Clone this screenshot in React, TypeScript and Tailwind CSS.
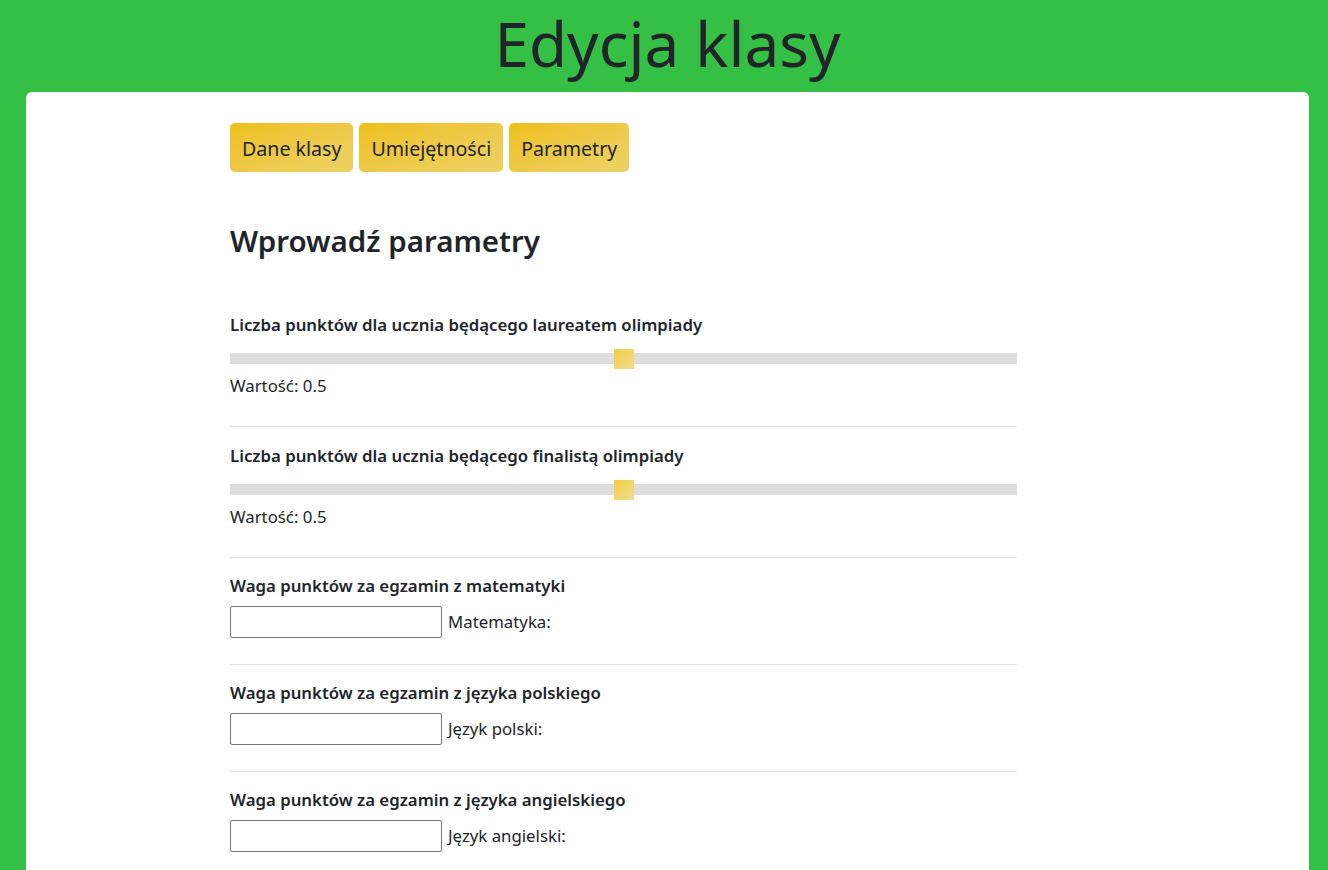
const FONT = "font-['Noto_Sans','Open_Sans',sans-serif]";

function Slider({ label, value, first }: { label: string; value: number; first?: boolean }) {
  return (
    <div className={first ? "pt-[17px] pb-7" : "border-t border-[#e3e3e3] pt-[17px] pb-7"}>
      <div className="text-[16.8px] font-semibold leading-6">{label}</div>
      <div className="relative mt-4 h-[11px] w-full bg-[#dedede]">
        <div
          className="absolute top-1/2 h-5 w-5 -translate-x-1/2 -translate-y-1/2 bg-linear-to-br from-[#f2cd3c] to-[#f0dd8c]"
          style={{ left: `${value * 100}%` }}
        />
      </div>
      <div className="mt-[10px] text-[16.8px] leading-6">Wartość: {value}</div>
    </div>
  );
}

function WeightField({ label, name }: { label: string; name: string }) {
  return (
    <div className="border-t border-[#e3e3e3] pt-4 pb-[26px]">
      <div className="text-[16.8px] font-semibold leading-6">{label}</div>
      <div className="mt-2 flex items-center gap-[6px]">
        <input
          type="text"
          className="h-8 w-[212px] rounded-[2px] border border-[#767676] bg-white px-1 outline-none"
        />
        <span className="text-[16.8px] leading-6">{name}</span>
      </div>
    </div>
  );
}

export default function App() {
  return (
    <div className={`min-h-screen bg-[#34c045] text-[#212529] ${FONT}`}>
      <div className="ml-[26px] mr-[19px]">
        <h1 className="flex h-[92px] items-center justify-center pb-[6px] text-[62px] font-normal leading-none">
          Edycja klasy
        </h1>
        <main className="min-h-[778px] rounded-t-[6px] bg-white pl-[204px] pt-[31px]">
          <div className="w-[787px]">
            <nav className="flex gap-[6px]">
              {["Dane klasy", "Umiejętności", "Parametry"].map((t) => (
                <button
                  key={t}
                  className="h-[49px] rounded-[5px] bg-linear-to-br from-[#f0c014] to-[#ecd264] px-3 pt-[3px] text-[19.6px]"
                >
                  {t}
                </button>
              ))}
            </nav>

            <h2 className="mt-[50px] mb-[36px] text-[29.5px] font-semibold leading-[38px]">Wprowadź parametry</h2>

            <Slider first label="Liczba punktów dla ucznia będącego laureatem olimpiady" value={0.5} />
            <Slider label="Liczba punktów dla ucznia będącego finalistą olimpiady" value={0.5} />
            <WeightField label="Waga punktów za egzamin z matematyki" name="Matematyka:" />
            <WeightField label="Waga punktów za egzamin z języka polskiego" name="Język polski:" />
            <WeightField label="Waga punktów za egzamin z języka angielskiego" name="Język angielski:" />
          </div>
        </main>
      </div>
    </div>
  );
}
